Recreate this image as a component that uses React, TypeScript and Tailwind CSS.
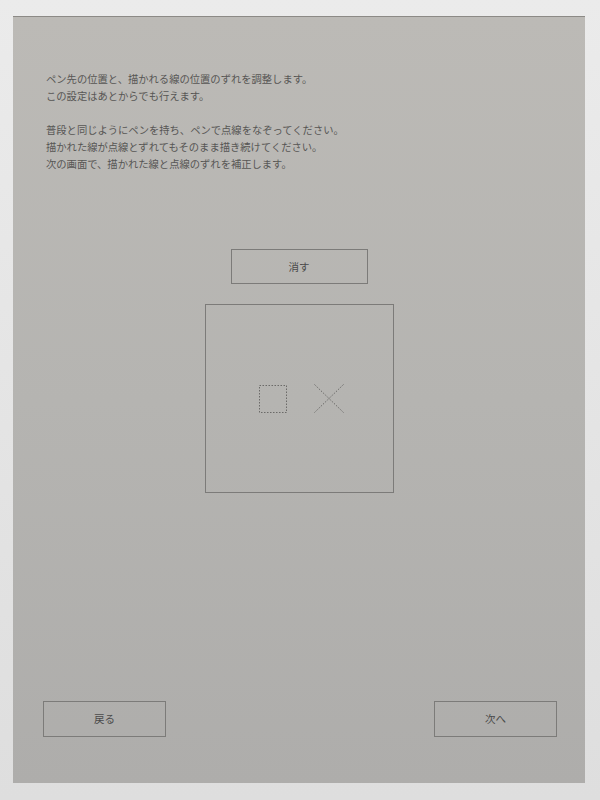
import React from "react";

const font = { fontFamily: '"Noto Sans CJK JP", "Noto Sans", sans-serif' };

function Btn({ label, className }: { label: string; className: string }) {
  return (
    <div
      className={`flex items-center justify-center border border-[#7c7b79] text-[10.5px] text-[#4a4a4a] ${className}`}
    >
      {label}
    </div>
  );
}

export default function App() {
  return (
    <div
      className="w-[600px] h-[800px] bg-gradient-to-b from-[#ebebeb] to-[#dedede] pt-[16px] pl-[13px] pr-[15px] pb-[17px]"
      style={font}
    >
      <div className="h-full flex flex-col border-t border-[#8c8a86] bg-gradient-to-b from-[#bcbab6] via-[#b5b4b1] to-[#aeadab]">
        <div className="pt-[53px] pl-[33px] text-[10.3px] leading-[17px] text-[#575654]">
          <p>ペン先の位置と、描かれる線の位置のずれを調整します。</p>
          <p>この設定はあとからでも行えます。</p>
          <p>&nbsp;</p>
          <p>普段と同じようにペンを持ち、ペンで点線をなぞってください。</p>
          <p>描かれた線が点線とずれてもそのまま描き続けてください。</p>
          <p>次の画面で、描かれた線と点線のずれを補正します。</p>
        </div>
        <div className="flex flex-col items-center mt-[77px]">
          <Btn label="消す" className="w-[137px] h-[35px]" />
          <div className="mt-[20px] w-[189px] h-[189px] border border-[#7c7b79] flex items-center justify-center gap-[27px] pl-[4px]">
            <svg width="28" height="28" viewBox="0 0 28 28">
              <rect
                x="0.5"
                y="0.5"
                width="27"
                height="27"
                fill="none"
                stroke="#6b6a68"
                strokeWidth="1"
                strokeDasharray="1.5 1.5"
              />
            </svg>
            <svg width="30" height="29" viewBox="0 0 30 29">
              <line x1="0.5" y1="0.5" x2="29.5" y2="28.5" stroke="#6b6a68" strokeWidth="1" strokeDasharray="1.5 1.5" />
              <line x1="29.5" y1="0.5" x2="0.5" y2="28.5" stroke="#6b6a68" strokeWidth="1" strokeDasharray="1.5 1.5" />
            </svg>
          </div>
        </div>
        <div className="flex-1" />
        <div className="flex justify-between pl-[30px] pr-[28px] pb-[46px]">
          <Btn label="戻る" className="w-[123px] h-[36px]" />
          <Btn label="次へ" className="w-[123px] h-[36px]" />
        </div>
      </div>
    </div>
  );
}
